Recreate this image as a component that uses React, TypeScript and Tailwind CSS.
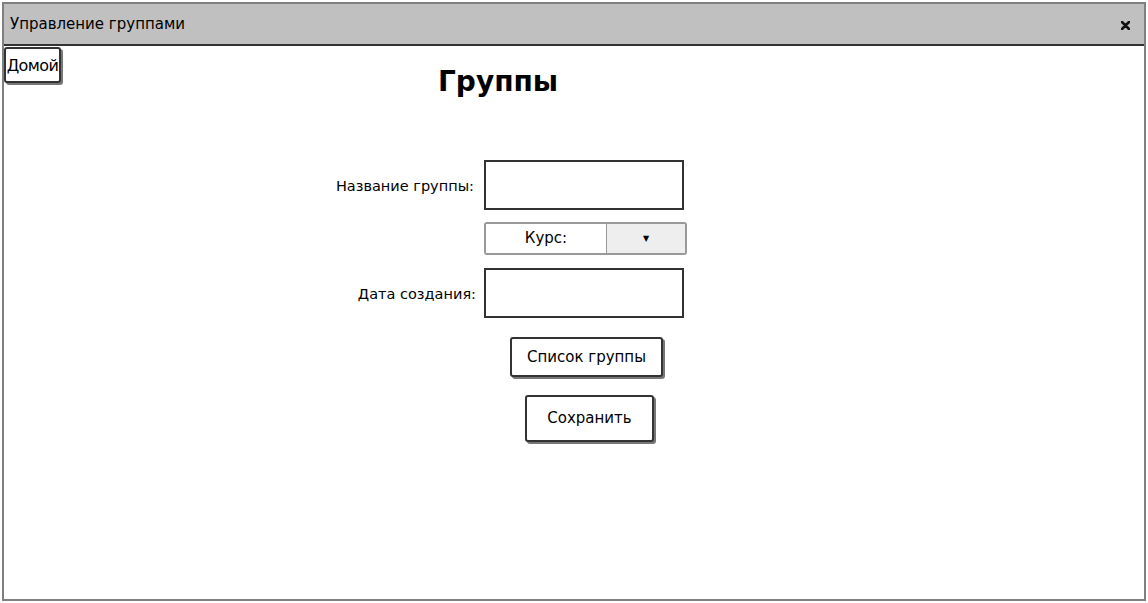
import React from 'react';

const font = { fontFamily: '"DejaVu Sans", "Liberation Sans", sans-serif' };

const App: React.FC = () => {
  return (
    <div className="w-[1148px] h-[603px] bg-white p-[2px]" style={font}>
      <div className="w-[1144px] h-[599px] border-2 border-[#808080] flex flex-col">
        <div className="h-[42px] bg-[#c0c0c0] border-b-2 border-[#333] flex items-center justify-between pl-[6px] pr-[14px] text-[15px] text-black">
          <span>Управление группами</span>
          <svg width="9" height="9" viewBox="0 0 9 9" className="mt-[2px]">
            <path d="M1 1L8 8M8 1L1 8" stroke="#111" strokeWidth="2.6" strokeLinecap="round" />
          </svg>
        </div>

        <div className="flex items-start pt-[1px]">
          <button className="h-[36px] w-[57px] bg-white border-2 border-[#333] rounded-[3px] shadow-[2px_2px_0_#777] text-[16px] tracking-[-0.6px] text-black leading-none whitespace-nowrap overflow-visible pt-[1px]">
            Домой
          </button>
          <h1 className="ml-[377px] mt-[21px] text-[28px] font-bold text-black leading-none">Группы</h1>
        </div>

        <div className="mt-[64px] flex flex-col">
          <div className="flex items-center">
            <label className="w-[470px] text-right text-[14.5px] text-black pt-[4px]">Название группы:</label>
            <input className="ml-[10px] w-[200px] h-[50px] border-2 border-[#333] bg-white outline-none" />
          </div>

          <div className="mt-[12px] ml-[480px] flex w-[203px] h-[33px] border-2 border-[#999] rounded-[3px] overflow-hidden text-[15px] text-black">
            <div className="w-[121px] flex items-center justify-center bg-white border-r border-[#999]">Курс:</div>
            <div className="flex-1 flex items-center justify-center bg-[#eeeeee] text-[8px]">▼</div>
          </div>

          <div className="mt-[13px] flex items-center">
            <label className="w-[472px] text-right text-[14.5px] text-black pt-[4px]">Дата создания:</label>
            <input className="ml-[8px] w-[200px] h-[50px] border-2 border-[#333] bg-white outline-none" />
          </div>

          <div className="mt-[19px] ml-[506px]">
            <button className="w-[153px] h-[40px] bg-white border-2 border-[#333] rounded-[3px] shadow-[2px_2px_0_#777] text-[15px] text-black">
              Список группы
            </button>
          </div>

          <div className="mt-[18px] ml-[521px]">
            <button className="w-[129px] h-[47px] bg-white border-2 border-[#333] rounded-[3px] shadow-[2px_2px_0_#777] text-[15px] text-black">
              Сохранить
            </button>
          </div>
        </div>
      </div>
    </div>
  );
};

export default App;
